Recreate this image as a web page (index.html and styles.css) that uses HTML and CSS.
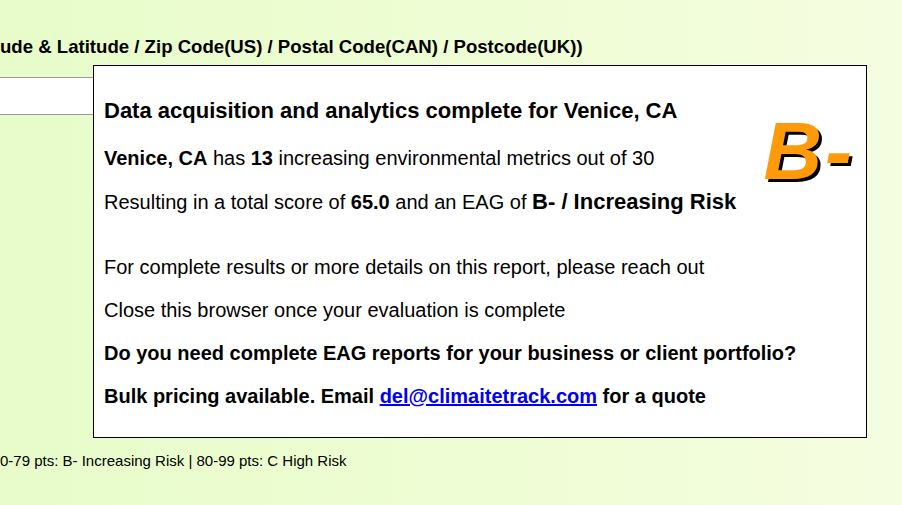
FILE: index.html
```html
<!DOCTYPE html>
<html>
<head>
<meta charset="utf-8">
<link rel="stylesheet" href="styles.css">
</head>
<body>
<div class="page">
  <h2 class="prompt">ude &amp; Latitude / Zip Code(US) / Postal Code(CAN) / Postcode(UK))</h2>
  <div class="field"></div>
  <p class="legend">0-79 pts: B- Increasing Risk | 80-99 pts: C High Risk</p>
</div>
<div class="modal">
  <div class="grade">B-</div>
  <h3 class="title">Data acquisition and analytics complete for Venice, CA</h3>
  <p class="line first"><b>Venice, CA</b> has <b>13</b> increasing environmental metrics out of 30</p>
  <p class="line">Resulting in a total score of <b>65.0</b> and an EAG of <b class="big">B- / Increasing Risk</b></p>
  <p class="line gap">For complete results or more details on this report, please reach out</p>
  <p class="line">Close this browser once your evaluation is complete</p>
  <p class="line"><b>Do you need complete EAG reports for your business or client portfolio?</b></p>
  <p class="line"><b>Bulk pricing available. Email <a href="#">del@climaitetrack.com</a> for a quote</b></p>
</div>
</body>
</html>
```

FILE: styles.css
```css
html, body {
  margin: 0;
  padding: 0;
  height: 100%;
  overflow: hidden;
}
body {
  background: linear-gradient(to right, #e7fcca 0%, #eefdd3 50%, #f5fde0 100%);
  font-family: "Liberation Sans", Arial, sans-serif;
  color: #000;
  position: relative;
}
.page {
  padding-top: 36px;
}
.prompt {
  margin: 0;
  font-size: 18.6px;
  font-weight: bold;
  line-height: 22px;
}
.field {
  margin-top: 19px;
  width: 200px;
  height: 36px;
  background: #fff;
  border-top: 1px solid #9a9a9a;
  border-bottom: 1px solid #9a9a9a;
}
.legend {
  margin: 0;
  margin-top: 337px;
  font-size: 15px;
  line-height: 18px;
}
.modal {
  position: absolute;
  left: 93px;
  top: 65px;
  width: 762px;
  height: 371px;
  border: 1px solid #000;
  background: #fff;
  padding: 0 0 0 10px;
  display: flex;
  flex-direction: column;
}
.title {
  margin: 33px 0 0 0;
  font-size: 22px;
  line-height: 24px;
  font-weight: bold;
}
.line {
  margin: 20px 0 0 0;
  font-size: 20px;
  line-height: 23px;
}
.line.first {
  margin-top: 24px;
}
.big {
  font-size: 22px;
}
.gap {
  margin-top: 42px;
}
.line a {
  color: #0000ee;
  text-decoration: underline;
}
.grade {
  position: absolute;
  right: 11px;
  top: 38px;
  font-size: 81px;
  line-height: 94px;
  font-weight: bold;
  font-style: italic;
  color: #ff9a0a;
  text-shadow: 3px 3px 0 #000;
  letter-spacing: 3px;
}
```
